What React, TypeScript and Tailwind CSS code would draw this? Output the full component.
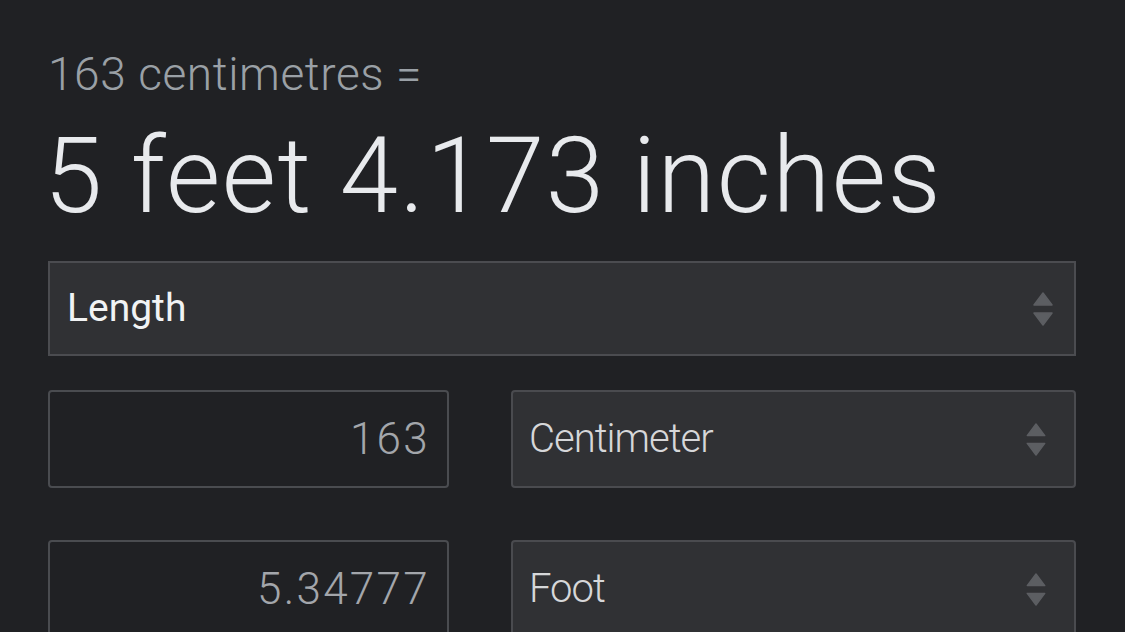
import React from "react";

const UpDown = ({ className }: { className?: string }) => (
  <svg viewBox="0 0 20 34" className={className} fill="currentColor">
    <path d="M10 1 L19 13 L1 13 Z" strokeLinejoin="round" stroke="currentColor" strokeWidth="1.5" />
    <path d="M1 21 L19 21 L10 33 Z" strokeLinejoin="round" stroke="currentColor" strokeWidth="1.5" />
  </svg>
);

type RowProps = {
  value: string;
  unit: string;
};

const ConvertRow: React.FC<RowProps> = ({ value, unit }) => {
  return (
    <div className="flex gap-[62px] h-[98px]">
      <div className="w-[401px] flex items-center justify-end pr-[17px] border-2 border-[#4a4c50] rounded-[4px] bg-[#202124]">
        <span className="text-[44px] font-light tracking-[2.3px] text-[#a3a6ab] leading-none">
          {value}
        </span>
      </div>
      <div className="flex-1 flex items-center justify-between pl-[16px] pr-[27px] border-2 border-[#4a4b4f] rounded-[4px] bg-[#303134]">
        <span className="text-[40px] font-light tracking-[-1px] text-[#d6d7d9] leading-none">
          {unit}
        </span>
        <UpDown className="w-[22px] h-[33px] text-[#5c5e62]" />
      </div>
    </div>
  );
};

export default function App() {
  return (
    <div
      className="w-full h-[632px] overflow-hidden bg-[#202124] pl-[48px] pr-[49px]"
      style={{ fontFamily: "Roboto, 'Liberation Sans', sans-serif" }}
    >
      <div className="pt-[51px] text-[46px] font-light tracking-[0.6px] leading-none text-[#9aa0a6]">
        163 centimetres =
      </div>
      <div className="mt-[27px] ml-[-4px] text-[105px] font-light tracking-[1.5px] leading-none text-[#e8eaed] whitespace-nowrap">
        5 feet 4.173 inches
      </div>
      <div className="mt-[32px] h-[95px] flex items-center justify-between pl-[17px] pr-[20px] border-2 border-[#4b4c50] bg-[#303134]">
        <span className="text-[39px] text-[#f1f3f4] leading-none">Length</span>
        <UpDown className="w-[22px] h-[34px] text-[#5c5e62]" />
      </div>
      <div className="mt-[34px] flex flex-col gap-[52px]">
        <ConvertRow value="163" unit="Centimeter" />
        <ConvertRow value="5.34777" unit="Foot" />
      </div>
    </div>
  );
}
